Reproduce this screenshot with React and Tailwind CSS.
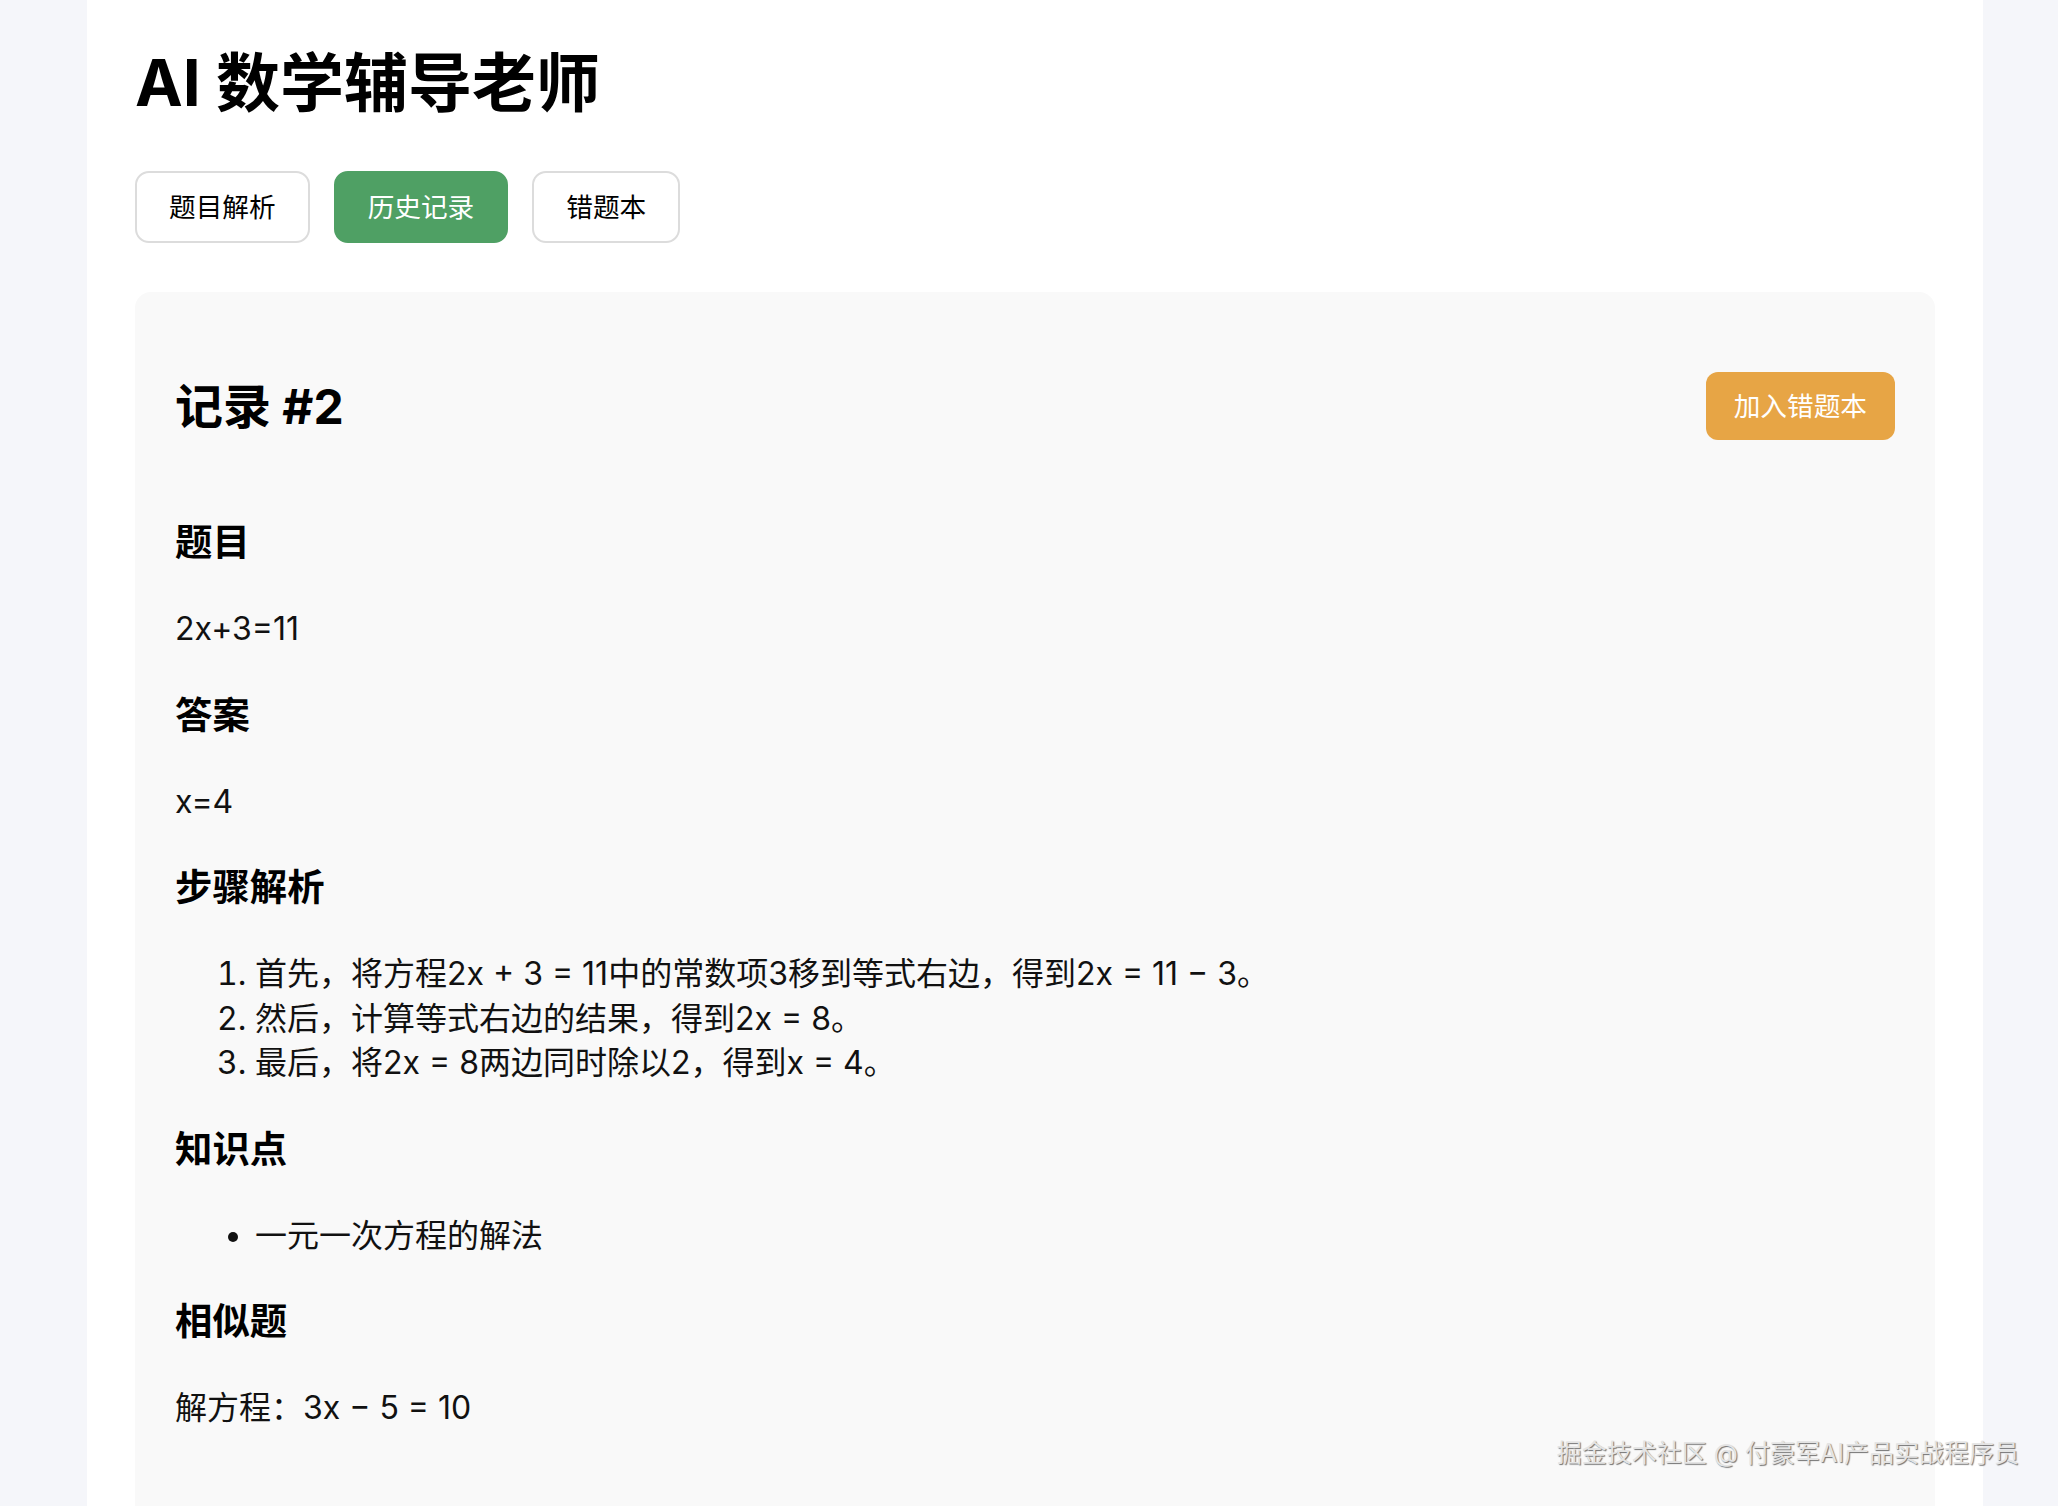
import React from 'react';

const FONT = 'font-[Inter,"Noto_Sans_CJK_SC",sans-serif]';

const steps = [
  '首先，将方程2x + 3 = 11中的常数项3移到等式右边，得到2x = 11 − 3。',
  '然后，计算等式右边的结果，得到2x = 8。',
  '最后，将2x = 8两边同时除以2，得到x = 4。',
];

function Tab({ label, active }) {
  return (
    <button
      className={
        active
          ? 'h-[72px] rounded-[14px] border-2 border-[#4fa064] bg-[#4fa064] px-[32px] text-[26.67px] text-white'
          : 'h-[72px] rounded-[14px] border-2 border-[#dcdcdc] bg-white px-[32px] text-[26.67px] text-black'
      }
    >
      {label}
    </button>
  );
}

function SectionTitle({ children }) {
  return <h3 className="text-[37.4px] leading-[52px] font-bold text-black">{children}</h3>;
}

export default function App() {
  return (
    <div className={`relative h-[1506px] w-full overflow-hidden bg-[#f5f6fa] ${FONT}`}>
      <div className="ml-[87px] min-h-full w-[1896px] bg-white px-[48px] pt-[38px]">
        <h1 className="text-[64px] leading-[90px] font-bold text-black">AI 数学辅导老师</h1>

        <div className="mt-[43px] flex gap-[24px]">
          <Tab label="题目解析" />
          <Tab label="历史记录" active />
          <Tab label="错题本" />
        </div>

        <div className="mt-[49px] rounded-[16px] bg-[#f9f9f9] px-[40px] pt-[40px] pb-[120px]">
          <div className="flex items-center justify-between py-[40px]">
            <h2 className="text-[48px] leading-[67px] font-bold text-black">记录 #2</h2>
            <button className="h-[68px] rounded-[12px] bg-[#e7a545] px-[28px] text-[26.67px] text-white">
              加入错题本
            </button>
          </div>

          <div className="mt-[37px] flex flex-col gap-[38px] text-[32px] leading-[44.5px] text-[#111]">
            <SectionTitle>题目</SectionTitle>
            <p>2x+3=11</p>
            <SectionTitle>答案</SectionTitle>
            <p>x=4</p>
            <SectionTitle>步骤解析</SectionTitle>
            <ol className="list-decimal pl-[80px]">
              {steps.map((s, i) => (
                <li key={i}>{s}</li>
              ))}
            </ol>
            <SectionTitle>知识点</SectionTitle>
            <ul className="list-disc pl-[80px]">
              <li>一元一次方程的解法</li>
            </ul>
            <SectionTitle>相似题</SectionTitle>
            <p>解方程：3x − 5 = 10</p>
          </div>
        </div>
      </div>

      <div className="absolute right-[39px] bottom-[36px] text-[25px] leading-[34px] text-[#e4e4e4] [text-shadow:1px_1px_1px_rgba(0,0,0,0.55)]">
        掘金技术社区 @ 付豪军AI产品实战程序员
      </div>
    </div>
  );
}
